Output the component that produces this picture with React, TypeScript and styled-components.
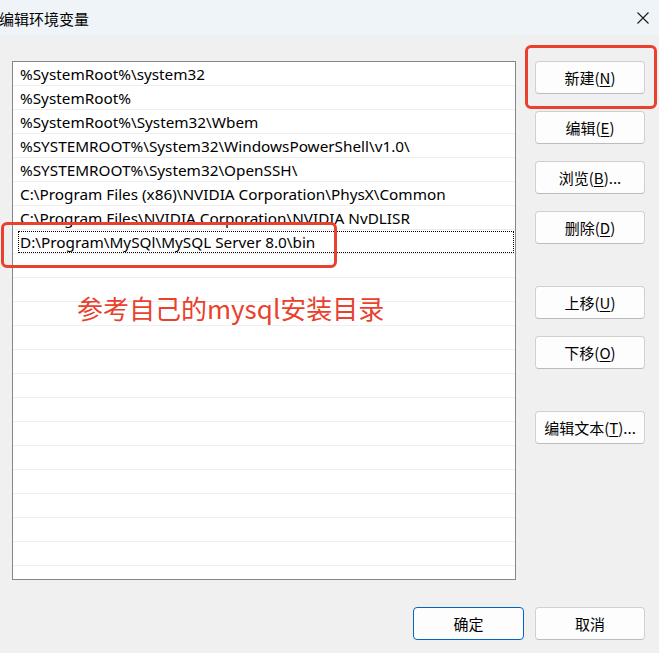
import styled, { createGlobalStyle } from "styled-components";

const GlobalStyle = createGlobalStyle`
  html, body {
    margin: 0;
    padding: 0;
    background: #f0f0f0;
  }
  body {
    font-family: "Noto Sans", "Noto Sans CJK SC", sans-serif;
  }
`;

const paths = [
  "%SystemRoot%\\system32",
  "%SystemRoot%",
  "%SystemRoot%\\System32\\Wbem",
  "%SYSTEMROOT%\\System32\\WindowsPowerShell\\v1.0\\",
  "%SYSTEMROOT%\\System32\\OpenSSH\\",
  "C:\\Program Files (x86)\\NVIDIA Corporation\\PhysX\\Common",
  "C:\\Program Files\\NVIDIA Corporation\\NVIDIA NvDLISR",
  "D:\\Program\\MySQl\\MySQL Server 8.0\\bin",
];

const TOTAL_ROWS = 21;

interface SideButton {
  label: string;
  key: string;
  tail?: string;
  gap: number;
}

const sideButtons: SideButton[] = [
  { label: "新建", key: "N", gap: 0 },
  { label: "编辑", key: "E", gap: 17 },
  { label: "浏览", key: "B", tail: "...", gap: 17 },
  { label: "删除", key: "D", gap: 17 },
  { label: "上移", key: "U", gap: 42 },
  { label: "下移", key: "O", gap: 17 },
  { label: "编辑文本", key: "T", tail: "...", gap: 42 },
];

export default function App() {
  const rows = Array.from({ length: TOTAL_ROWS }, (_, i) => paths[i] ?? "");

  return (
    <Window>
      <GlobalStyle />
      <TitleBar>
        <Title>编辑环境变量</Title>
        <CloseIcon viewBox="0 0 12 12">
          <path d="M0.5 0.5 L11.5 11.5 M11.5 0.5 L0.5 11.5" stroke="#1a1a1a" strokeWidth="1.1" fill="none" />
        </CloseIcon>
      </TitleBar>

      <Body>
        <Main>
          <ListBox>
            {rows.map((text, i) => (
              <Row key={i} $focused={i === paths.length - 1}>
                {text}
              </Row>
            ))}
          </ListBox>

          <ButtonColumn>
            {sideButtons.map((b) => (
              <Button key={b.key} $gap={b.gap}>
                {b.label}(<u>{b.key}</u>){b.tail}
              </Button>
            ))}
          </ButtonColumn>
        </Main>

        <Footer>
          <Button $primary $width={111}>确定</Button>
          <Button>取消</Button>
        </Footer>
      </Body>

      <Mark $left={525} $top={45} $width={132} $height={64} />
      <Mark $left={1} $top={222} $width={336} $height={46} />
      <Note>参考自己的mysql安装目录</Note>
    </Window>
  );
}

const Window = styled.div`
  position: relative;
  width: 659px;
  height: 653px;
  background: #f0f0f0;
  overflow: hidden;
  display: flex;
  flex-direction: column;
  color: #000;
`;

const TitleBar = styled.div`
  height: 35px;
  background: #eff4f9;
  display: flex;
  align-items: center;
  justify-content: space-between;
  padding: 0 10px 0 0;
  box-sizing: border-box;
`;

const Title = styled.span`
  font-family: "Noto Sans CJK SC", sans-serif;
  font-size: 15px;
  margin-left: -1px;
  margin-top: 1px;
`;

const CloseIcon = styled.svg`
  width: 12px;
  height: 12px;
  margin-top: 1px;
`;

const Body = styled.div`
  flex: 1;
  display: flex;
  flex-direction: column;
  padding: 26px 14px 13px 12px;
`;

const Main = styled.div`
  display: flex;
  gap: 19px;
`;

const ListBox = styled.div`
  width: 504px;
  height: 519px;
  box-sizing: border-box;
  border: 1px solid #868686;
  background: #fff;
  overflow: hidden;
`;

const Row = styled.div<{ $focused?: boolean }>`
  height: 24px;
  box-sizing: border-box;
  border-bottom: 1px solid #efefef;
  padding: 1px 0 0 7px;
  font-size: 15.3px;
  line-height: 23px;
  white-space: nowrap;
  position: relative;

  ${(p) =>
    p.$focused &&
    `
    &::after {
      content: "";
      position: absolute;
      left: 5px;
      right: 1px;
      top: 1px;
      bottom: 0;
      border: 1px dotted #000;
    }
  `}
`;

const ButtonColumn = styled.div`
  display: flex;
  flex-direction: column;
`;

const Button = styled.button<{ $gap?: number; $primary?: boolean; $width?: number }>`
  width: ${(p) => p.$width ?? 110}px;
  height: 33px;
  margin-top: ${(p) => p.$gap ?? 0}px;
  box-sizing: border-box;
  border: 1px solid ${(p) => (p.$primary ? "#0067c0" : "#d0d0d0")};
  border-bottom-color: ${(p) => (p.$primary ? "#0067c0" : "#bcbcbc")};
  border-radius: 4px;
  background: #fdfdfd;
  font-family: "Noto Sans CJK SC", sans-serif;
  font-size: 15px;
  color: #000;
  padding: 0;
  cursor: pointer;

  u {
    text-underline-offset: 2px;
  }
`;

const Footer = styled.div`
  display: flex;
  justify-content: flex-end;
  gap: 11px;
  margin-top: 27px;
`;

const Mark = styled.div<{ $left: number; $top: number; $width: number; $height: number }>`
  position: absolute;
  left: ${(p) => p.$left}px;
  top: ${(p) => p.$top}px;
  width: ${(p) => p.$width}px;
  height: ${(p) => p.$height}px;
  box-sizing: border-box;
  border: 3px solid #e9412d;
  border-radius: 6px;
  pointer-events: none;
`;

const Note = styled.div`
  position: absolute;
  left: 77px;
  top: 290px;
  font-family: "Noto Sans CJK SC", sans-serif;
  font-size: 26px;
  line-height: 36px;
  color: #e9412d;
  white-space: nowrap;
`;
